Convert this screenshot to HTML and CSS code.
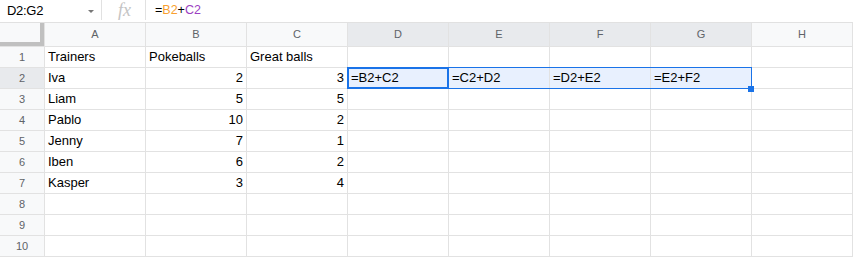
FILE: index.html
```html
<!DOCTYPE html>
<html lang="en">
<head>
    <meta charset="UTF-8">
    <title>Trainers sheet</title>
    <link rel="stylesheet" href="styles.css">
</head>
<body>
    <div class="formula_bar">
        <div class="name_box">
            <span>D2:G2</span>
            <span class="caret"></span>
        </div>
        <div class="fx">fx</div>
        <div class="formula">=<span class="ref_b">B2</span>+<span class="ref_c">C2</span></div>
    </div>

    <div class="grid">
        <div class="corner"></div>
        <div class="col_head">A</div>
        <div class="col_head">B</div>
        <div class="col_head">C</div>
        <div class="col_head picked">D</div>
        <div class="col_head picked">E</div>
        <div class="col_head picked">F</div>
        <div class="col_head picked">G</div>
        <div class="col_head">H</div>

        <div class="row_head">1</div>
        <div class="cell">Trainers</div>
        <div class="cell">Pokeballs</div>
        <div class="cell">Great balls</div>
        <div class="cell"></div><div class="cell"></div><div class="cell"></div><div class="cell"></div><div class="cell"></div>

        <div class="row_head picked">2</div>
        <div class="cell">Iva</div>
        <div class="cell num">2</div>
        <div class="cell num">3</div>
        <div class="cell sel anchor">=B2+C2
            <div class="range"><span class="handle"></span></div>
            <div class="active"></div>
        </div>
        <div class="cell sel">=C2+D2</div>
        <div class="cell sel">=D2+E2</div>
        <div class="cell sel">=E2+F2</div>
        <div class="cell"></div>

        <div class="row_head">3</div>
        <div class="cell">Liam</div>
        <div class="cell num">5</div>
        <div class="cell num">5</div>
        <div class="cell"></div><div class="cell"></div><div class="cell"></div><div class="cell"></div><div class="cell"></div>

        <div class="row_head">4</div>
        <div class="cell">Pablo</div>
        <div class="cell num">10</div>
        <div class="cell num">2</div>
        <div class="cell"></div><div class="cell"></div><div class="cell"></div><div class="cell"></div><div class="cell"></div>

        <div class="row_head">5</div>
        <div class="cell">Jenny</div>
        <div class="cell num">7</div>
        <div class="cell num">1</div>
        <div class="cell"></div><div class="cell"></div><div class="cell"></div><div class="cell"></div><div class="cell"></div>

        <div class="row_head">6</div>
        <div class="cell">Iben</div>
        <div class="cell num">6</div>
        <div class="cell num">2</div>
        <div class="cell"></div><div class="cell"></div><div class="cell"></div><div class="cell"></div><div class="cell"></div>

        <div class="row_head">7</div>
        <div class="cell">Kasper</div>
        <div class="cell num">3</div>
        <div class="cell num">4</div>
        <div class="cell"></div><div class="cell"></div><div class="cell"></div><div class="cell"></div><div class="cell"></div>

        <div class="row_head">8</div>
        <div class="cell"></div><div class="cell"></div><div class="cell"></div><div class="cell"></div><div class="cell"></div><div class="cell"></div><div class="cell"></div><div class="cell"></div>

        <div class="row_head">9</div>
        <div class="cell"></div><div class="cell"></div><div class="cell"></div><div class="cell"></div><div class="cell"></div><div class="cell"></div><div class="cell"></div><div class="cell"></div>

        <div class="row_head">10</div>
        <div class="cell"></div><div class="cell"></div><div class="cell"></div><div class="cell"></div><div class="cell"></div><div class="cell"></div><div class="cell"></div><div class="cell"></div>
    </div>
</body>
</html>
```

FILE: styles.css
```css
* {
    box-sizing: border-box;
    margin: 0;
    padding: 0;
}
body {
    font-family: "Liberation Sans", Arial, sans-serif;
    background-color: #fff;
    color: #000;
    width: 853px;
    overflow: hidden;
}

/* formula bar */
.formula_bar {
    display: flex;
    height: 23px;
    border-bottom: 1px solid #e1e1e1;
}
.name_box {
    width: 101px;
    display: flex;
    align-items: center;
    justify-content: space-between;
    padding: 0 7px 1px 7px;
    font-size: 13px;
    letter-spacing: -0.3px;
}
.caret {
    width: 0;
    height: 0;
    border-left: 3px solid transparent;
    border-right: 3px solid transparent;
    border-top: 3px solid #777;
    margin-top: 2px;
}
.fx {
    width: 45px;
    height: 20px;
    border-left: 1px solid #e1e1e1;
    border-right: 1px solid #e1e1e1;
    text-align: center;
    font-family: "Liberation Serif", "Times New Roman", serif;
    font-style: italic;
    font-size: 18px;
    line-height: 20px;
    color: #c4c4c4;
    padding: 0 0 2px 2px;
}
.formula {
    padding-left: 9px;
    font-size: 12.5px;
    line-height: 21px;
}
.ref_b {
    color: #f8a030;
}
.ref_c {
    color: #9c3fc2;
}

/* sheet grid */
.grid {
    display: grid;
    grid-template-columns: 44px repeat(8, 100px);
    grid-template-rows: 23px repeat(10, 20px);
    gap: 1px;
    background-color: #e2e2e2;
    padding: 0 1px 1px 0;
}
.corner {
    background-color: #f8f9fa;
    border-right: 4px solid #c0c0c0;
    border-bottom: 4px solid #c0c0c0;
}
.col_head, .row_head {
    background-color: #f8f9fa;
    color: #5f6368;
    font-size: 11px;
    text-align: center;
}
.col_head {
    line-height: 23px;
}
.row_head {
    line-height: 20px;
}
.col_head.picked, .row_head.picked {
    background-color: #e8eaed;
}
.cell {
    background-color: #fff;
    font-size: 13px;
    line-height: 20px;
    padding: 0 3px;
    white-space: nowrap;
}
.num {
    text-align: right;
}
.sel {
    background-color: #e8f0fe;
}

/* selection D2:G2 */
.anchor {
    position: relative;
}
.range {
    position: absolute;
    left: -1px;
    top: -1px;
    width: 405px;
    height: 22px;
    border: 1px solid #1a73e8;
    z-index: 2;
}
.handle {
    position: absolute;
    right: -3px;
    bottom: -4px;
    width: 6px;
    height: 6px;
    background-color: #1a73e8;
}
.active {
    position: absolute;
    left: -1px;
    top: -1px;
    width: 102px;
    height: 22px;
    border: 2px solid #1a73e8;
    z-index: 3;
}
```
